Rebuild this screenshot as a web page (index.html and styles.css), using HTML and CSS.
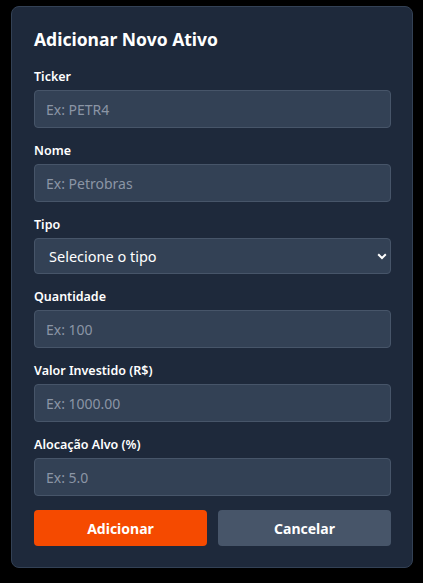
FILE: index.html
```html
<!DOCTYPE html>
<html lang="pt-BR">
<head>
<meta charset="utf-8">
<link rel="stylesheet" href="styles.css">
</head>
<body>
<form class="card">
  <h2 class="title">Adicionar Novo Ativo</h2>
  <div class="field">
    <label class="label">Ticker</label>
    <input class="input" type="text" placeholder="Ex: PETR4">
  </div>
  <div class="field">
    <label class="label">Nome</label>
    <input class="input" type="text" placeholder="Ex: Petrobras">
  </div>
  <div class="field">
    <label class="label">Tipo</label>
    <div class="select-wrap">
      <select class="select">
        <option>Selecione o tipo</option>
      </select>
      <svg class="chevron" width="10" height="7" viewBox="0 0 10 7"><path d="M1.2 1.3 L5 5 L8.8 1.3" fill="none" stroke="#fff" stroke-width="2"/></svg>
    </div>
  </div>
  <div class="field">
    <label class="label">Quantidade</label>
    <input class="input" type="text" placeholder="Ex: 100">
  </div>
  <div class="field">
    <label class="label">Valor Investido (R$)</label>
    <input class="input" type="text" placeholder="Ex: 1000.00">
  </div>
  <div class="field">
    <label class="label">Alocação Alvo (%)</label>
    <input class="input" type="text" placeholder="Ex: 5.0">
  </div>
  <div class="actions">
    <button type="button" class="btn btn-primary">Adicionar</button>
    <button type="button" class="btn btn-secondary">Cancelar</button>
  </div>
</form>
</body>
</html>
```

FILE: styles.css
```css
* { box-sizing: border-box; }
html, body { margin: 0; padding: 0; background: #000; }
body {
  font-family: "Noto Sans", "Open Sans", sans-serif;
  color: #fff;
}
.card {
  width: 402px;
  margin: 6px 0 0 11px;
  background: #1e293b;
  border: 1px solid #334155;
  border-radius: 8px;
  padding: 20px 21px 21px 22px;
  display: flex;
  flex-direction: column;
}
.title {
  margin: 0 0 17px 0;
  font-size: 17.5px;
  line-height: 24px;
  font-weight: 700;
}
.field {
  display: flex;
  flex-direction: column;
  margin-bottom: 14px;
}
.label {
  font-size: 12.5px;
  line-height: 18px;
  font-weight: 600;
  margin-bottom: 4px;
}
.input {
  height: 38px;
  width: 100%;
  background: #334155;
  border: 1px solid #475569;
  border-radius: 4px;
  padding: 0 11px;
  font-family: inherit;
  font-size: 14px;
  color: #fff;
  outline: none;
}
.input::placeholder { color: #8b95a5; }
.select-wrap { position: relative; }
.select {
  appearance: none;
  -webkit-appearance: none;
  height: 36px;
  width: 100%;
  background: #334155;
  border: 1px solid #475569;
  border-radius: 4px;
  padding: 0 14px;
  font-family: inherit;
  font-size: 14.5px;
  color: #fff;
  outline: none;
}
.chevron {
  position: absolute;
  right: 4px;
  top: 15px;
}
.actions {
  display: flex;
  gap: 11px;
}
.btn {
  flex: 1;
  height: 36px;
  border: none;
  border-radius: 4px;
  font-family: inherit;
  font-size: 14px;
  font-weight: 700;
  color: #fff;
}
.btn-primary { background: #f54a00; }
.btn-secondary { background: #475569; }
```
